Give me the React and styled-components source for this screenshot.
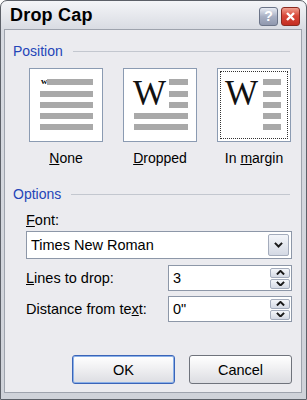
import React from 'react';
import styled, { createGlobalStyle } from 'styled-components';

const GlobalStyle = createGlobalStyle`
  html, body {
    margin: 0;
    padding: 0;
    background: #ffffff;
  }
  body {
    font-family: 'Liberation Sans', Arial, sans-serif;
    color: #000;
  }
`;

const Window = styled.div`
  width: 307px;
  height: 400px;
  box-sizing: border-box;
  border: 1px solid #5c6068;
  border-radius: 7px 7px 0 0;
  background: linear-gradient(#f4f5f8, #d7dae1 30px, #cfd2d9);
  display: flex;
  flex-direction: column;
  overflow: hidden;
`;

const TitleBar = styled.div`
  height: 28px;
  display: flex;
  align-items: center;
  padding: 0 6px 0 9px;
`;

const Title = styled.div`
  font-weight: bold;
  font-size: 18px;
  letter-spacing: 0.2px;
`;

const TitleButtons = styled.div`
  margin-left: auto;
  display: flex;
  gap: 3px;
  margin-top: 2px;
`;

const CaptionButton = styled.div`
  width: 19px;
  height: 19px;
  box-sizing: border-box;
  border-radius: 3px;
  border: 1px solid ${p => (p.$close ? '#8a2a20' : '#6b7488')};
  background: ${p =>
    p.$close
      ? 'linear-gradient(#f0a090, #d8483a 45%, #c42e22)'
      : 'linear-gradient(#e8ecf4, #a8b0c4 50%, #9098ae)'};
  display: flex;
  align-items: center;
  justify-content: center;
  color: #fff;
  font-weight: bold;
  font-size: 14px;
`;

const Client = styled.div`
  flex: 1;
  margin: 0 4px 6px 3px;
  border: 1px solid #9ea3ad;
  background: #ebebef;
  padding: 0 8px 0 8px;
  display: flex;
  flex-direction: column;
`;

const GroupHeader = styled.div`
  display: flex;
  align-items: center;
  gap: 10px;
  height: 18px;
  margin-top: ${p => p.$top}px;
  padding-right: 3px;
  color: #2445b8;
  font-size: 14px;
`;

const HeaderLine = styled.div`
  flex: 1;
  height: 1px;
  background: #c3c7cf;
`;

const PreviewRow = styled.div`
  display: grid;
  grid-template-columns: repeat(3, 74px);
  column-gap: 20px;
  padding-left: 16px;
  margin-top: 8px;
`;

const PreviewOption = styled.div`
  display: flex;
  flex-direction: column;
  align-items: center;
`;

const PreviewBox = styled.div`
  width: 74px;
  height: 74px;
  box-sizing: border-box;
  border: 1px solid #8b9bb2;
  background: #fff;
  position: relative;
  padding: 2px;
`;

const FocusRing = styled.div`
  position: absolute;
  inset: 2px;
  border: 1px dotted #333;
  pointer-events: none;
`;

const Bar = styled.div`
  position: absolute;
  height: 6px;
  background: #a9a9a9;
`;

const BigW = styled.div`
  position: absolute;
  font-family: 'Liberation Serif', 'Times New Roman', serif;
  font-size: 35px;
  line-height: 1;
  color: #111;
`;

const SmallW = styled.div`
  position: absolute;
  left: 11px;
  top: 8px;
  font-family: 'Liberation Serif', serif;
  font-weight: bold;
  font-size: 9px;
  line-height: 1;
`;

const Caption = styled.div`
  margin-top: 8px;
  font-size: 14px;
  line-height: 16px;
`;

const Fields = styled.div`
  padding-left: 13px;
  padding-right: 1px;
  display: flex;
  flex-direction: column;
`;

const Label = styled.div`
  font-size: 14.5px;
  line-height: 16px;
  margin-top: ${p => p.$top || 0}px;
`;

const Combo = styled.div`
  margin-top: 3px;
  height: 28px;
  box-sizing: border-box;
  border: 1px solid #8d97a8;
  background: #fff;
  display: flex;
  align-items: center;
  padding: 0 2px 0 4px;
  font-size: 14.5px;
`;

const ComboText = styled.div`
  flex: 1;
`;

const DropButton = styled.div`
  width: 21px;
  height: 22px;
  box-sizing: border-box;
  border: 1px solid #a4acbc;
  border-radius: 2px;
  background: linear-gradient(#f4f6fa, #d4d9e4);
  display: flex;
  align-items: center;
  justify-content: center;
`;

const FieldRow = styled.div`
  display: flex;
  align-items: center;
  margin-top: ${p => p.$top}px;
`;

const FieldLabel = styled.div`
  width: 142px;
  font-size: 14.5px;
`;

const SpinBox = styled.div`
  flex: 1;
  height: 26px;
  box-sizing: border-box;
  border: 1px solid #8d97a8;
  background: #fff;
  display: flex;
  align-items: center;
  padding: 0 1px 0 4px;
  font-size: 14.5px;
`;

const SpinButtons = styled.div`
  display: flex;
  flex-direction: column;
  gap: 1px;
`;

const SpinButton = styled.div`
  width: 20px;
  height: 10px;
  box-sizing: border-box;
  border: 1px solid #a4acbc;
  border-radius: 2px;
  background: linear-gradient(#f4f6fa, #d4d9e4);
  display: flex;
  align-items: center;
  justify-content: center;
`;

const ButtonRow = styled.div`
  margin-top: auto;
  margin-bottom: 8px;
  display: flex;
  justify-content: flex-end;
  gap: 14px;
  padding-right: 1px;
`;

const Button = styled.div`
  width: 103px;
  height: 29px;
  box-sizing: border-box;
  border: 1px solid ${p => (p.$default ? '#3a64b8' : '#6f737c')};
  box-shadow: ${p => (p.$default ? 'inset 0 0 0 1px #8ab0e8' : 'none')};
  border-radius: 3px;
  background: linear-gradient(#ffffff, #f0f0f2 45%, #dcdde2);
  display: flex;
  align-items: center;
  justify-content: center;
  font-size: 14.5px;
`;

const Chevron = ({ up, size = 9 }) => (
  <svg width={size} height={size * 0.6} viewBox="0 0 10 6">
    <path
      d={up ? 'M1 5 L5 1 L9 5' : 'M1 1 L5 5 L9 1'}
      fill="none"
      stroke="#1a1a1a"
      strokeWidth="2.2"
    />
  </svg>
);

const CloseGlyph = () => (
  <svg width="11" height="11" viewBox="0 0 11 11">
    <path d="M2 2 L9 9 M9 2 L2 9" stroke="#fff" strokeWidth="2.4" />
  </svg>
);

const bars = (list) =>
  list.map(([l, t, w], i) => (
    <Bar key={i} style={{ left: l, top: t, width: w }} />
  ));

const ROWS = [10, 22, 33, 44, 55];

const Spinner = ({ value }) => (
  <SpinBox>
    <ComboText>{value}</ComboText>
    <SpinButtons>
      <SpinButton>
        <Chevron up size={9} />
      </SpinButton>
      <SpinButton>
        <Chevron size={9} />
      </SpinButton>
    </SpinButtons>
  </SpinBox>
);

const App = () => (
  <>
    <GlobalStyle />
    <Window>
      <TitleBar>
        <Title>Drop Cap</Title>
        <TitleButtons>
          <CaptionButton>?</CaptionButton>
          <CaptionButton $close>
            <CloseGlyph />
          </CaptionButton>
        </TitleButtons>
      </TitleBar>
      <Client>
        <GroupHeader $top={12}>
          Position
          <HeaderLine />
        </GroupHeader>
        <PreviewRow>
          <PreviewOption>
            <PreviewBox>
              <SmallW>w</SmallW>
              {bars([
                [17, ROWS[0], 46],
                ...ROWS.slice(1).map(t => [10, t, 53]),
              ])}
            </PreviewBox>
            <Caption>
              <u>N</u>one
            </Caption>
          </PreviewOption>
          <PreviewOption>
            <PreviewBox>
              <BigW style={{ left: 9, top: 7 }}>W</BigW>
              {bars([
                ...ROWS.slice(0, 3).map(t => [45, t, 19]),
                ...ROWS.slice(3).map(t => [10, t, 54]),
              ])}
            </PreviewBox>
            <Caption>
              <u>D</u>ropped
            </Caption>
          </PreviewOption>
          <PreviewOption>
            <PreviewBox>
              <FocusRing />
              <BigW style={{ left: 7, top: 7 }}>W</BigW>
              {bars(ROWS.map(t => [45, t, 18]))}
            </PreviewBox>
            <Caption>
              In <u>m</u>argin
            </Caption>
          </PreviewOption>
        </PreviewRow>
        <GroupHeader $top={19}>
          Options
          <HeaderLine />
        </GroupHeader>
        <Fields>
          <Label $top={9}>
            <u>F</u>ont:
          </Label>
          <Combo>
            <ComboText>Times New Roman</ComboText>
            <DropButton>
              <Chevron />
            </DropButton>
          </Combo>
          <FieldRow $top={6}>
            <FieldLabel>
              <u>L</u>ines to drop:
            </FieldLabel>
            <Spinner value="3" />
          </FieldRow>
          <FieldRow $top={5}>
            <FieldLabel>
              Distance from te<u>x</u>t:
            </FieldLabel>
            <Spinner value={'0"'} />
          </FieldRow>
        </Fields>
        <ButtonRow>
          <Button $default>OK</Button>
          <Button>Cancel</Button>
        </ButtonRow>
      </Client>
    </Window>
  </>
);

export default App;
